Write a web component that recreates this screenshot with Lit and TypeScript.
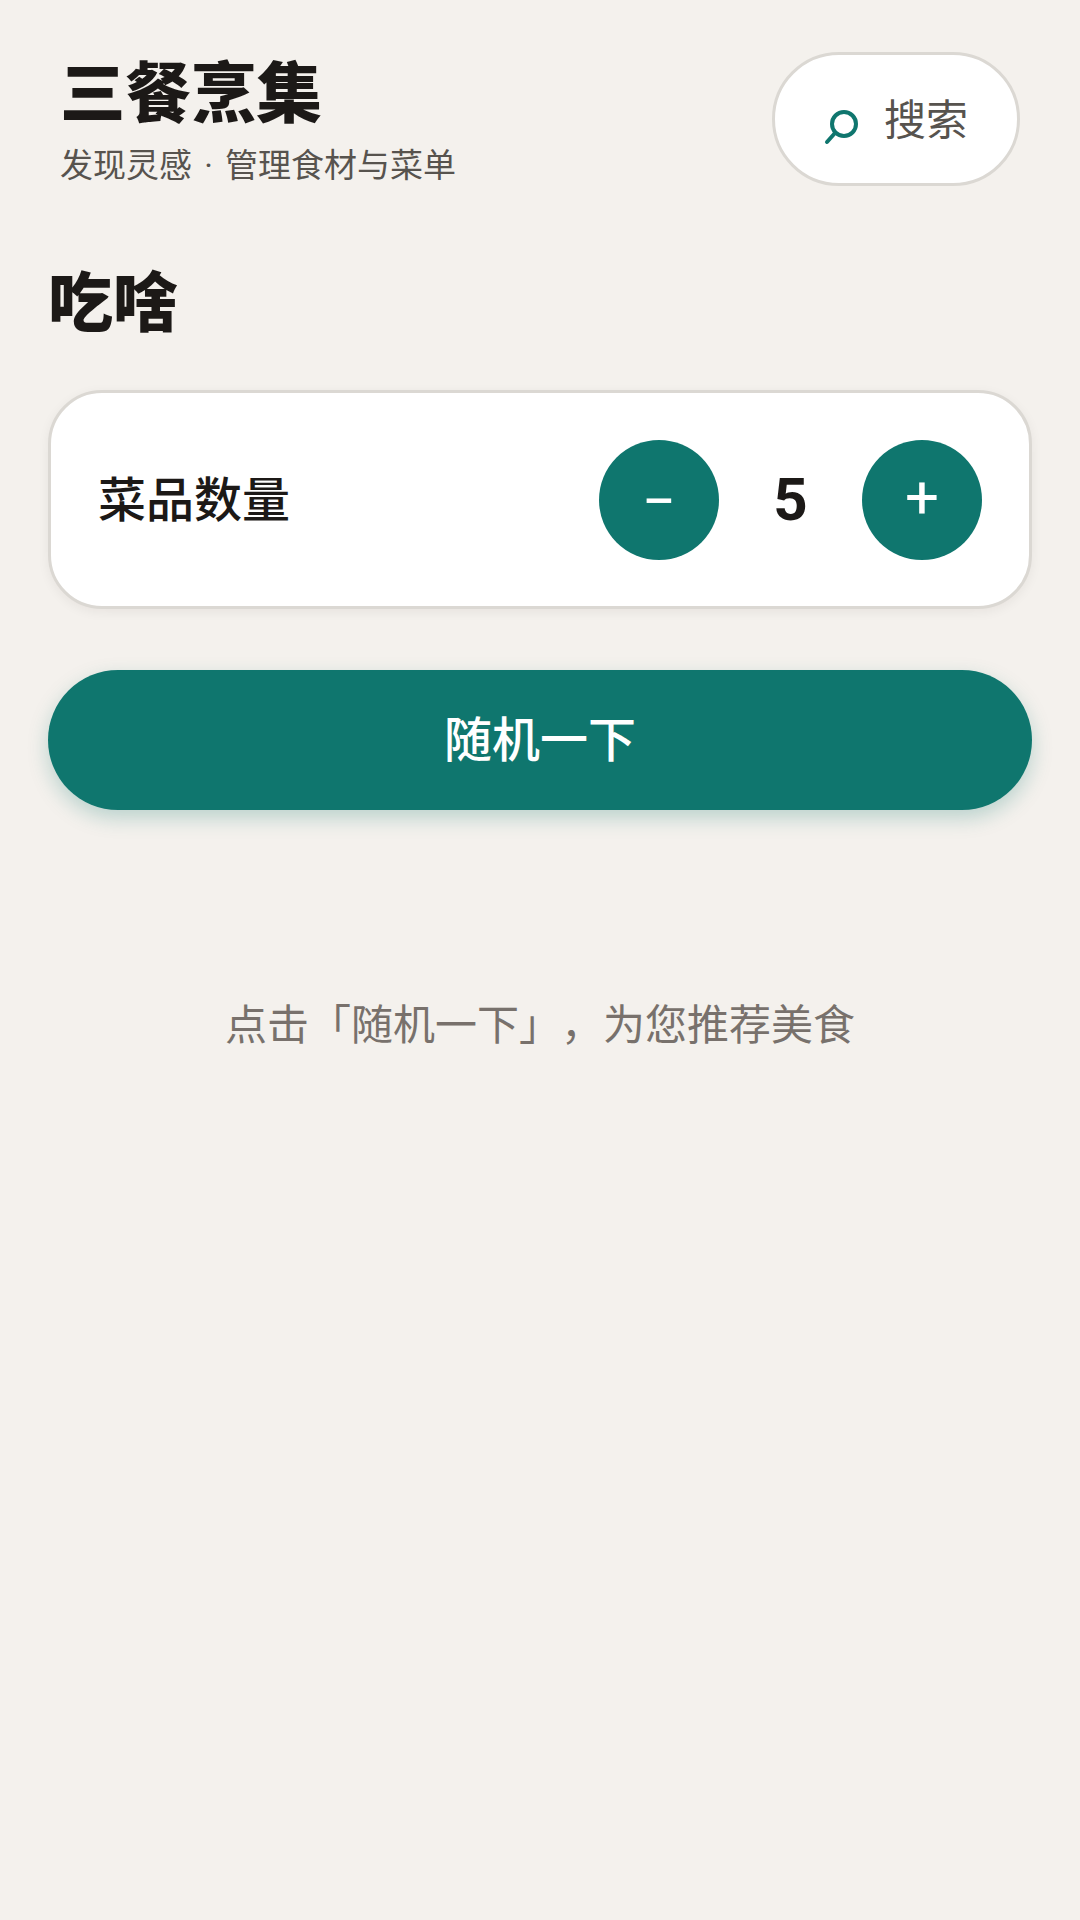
import { LitElement, html, css } from 'lit';
import { customElement, state } from 'lit/decorators.js';

@customElement('app-root')
export class AppRoot extends LitElement {
  @state() count = 5;

  static styles = css`
    :host {
      display: block;
      min-height: 1920px;
      background: #f4f1ed;
      color: #1c1917;
      font-family: Roboto, 'Noto Sans CJK SC', sans-serif;
      text-spacing-trim: space-all;
    }
    main {
      padding: 52px 48px 0;
      display: flex;
      flex-direction: column;
    }
    .header {
      display: flex;
      justify-content: space-between;
      align-items: flex-start;
      padding: 0 12px;
    }
    .titles {
      padding-top: 7px;
    }
    h1 {
      margin: 0;
      font-size: 65.5px;
      line-height: 72px;
      font-weight: 900;
    }
    .sub {
      margin-top: 15px;
      font-size: 33px;
      line-height: 40px;
      word-spacing: 4px;
      color: #57534e;
    }
    .search {
      width: 248px;
      height: 134px;
      box-sizing: border-box;
      border: 3px solid #dbd8d3;
      border-radius: 67px;
      background: #fff;
      display: flex;
      align-items: center;
      gap: 24px;
      padding: 0 0 0 49px;
      font-size: 42px;
      color: #57534e;
      font-family: inherit;
    }
    .search svg {
      margin-top: 16px;
    }
    .search span {
      margin-top: -6px;
    }
    h2 {
      margin: 79px 0 0;
      font-size: 65px;
      line-height: 78px;
      font-weight: 900;
    }
    .card {
      margin-top: 47px;
      height: 219px;
      box-sizing: border-box;
      border: 3px solid #dbd8d3;
      border-radius: 54px;
      background: #fff;
      box-shadow: 0 3px 12px rgba(28, 25, 23, 0.06);
      padding: 0 47px;
      display: flex;
      align-items: center;
      justify-content: space-between;
    }
    .label {
      margin-top: -8px;
      font-size: 48px;
      font-weight: 500;
    }
    .stepper {
      display: flex;
      align-items: center;
      padding-top: 1px;
    }
    .round {
      width: 120px;
      height: 120px;
      border: 0;
      padding: 0 0 6px;
      border-radius: 50%;
      background: #0f766e;
      color: #fff;
      display: flex;
      align-items: center;
      justify-content: center;
      font-family: inherit;
      font-size: 60px;
      font-weight: 400;
    }
    .round.minus {
      padding: 2px 0 0;
    }
    .count {
      width: 143px;
      margin-top: -2px;
      text-align: center;
      font-size: 60px;
      font-weight: 700;
    }
    .go {
      margin-top: 61px;
      height: 140px;
      border: 0;
      padding: 0 0 8px;
      border-radius: 70px;
      background: #0f766e;
      color: #fff;
      font-family: inherit;
      font-size: 48px;
      font-weight: 500;
      box-shadow: 0 8px 20px rgba(15, 118, 110, 0.25);
    }
    .hint {
      margin-top: 186px;
      text-align: center;
      font-size: 42px;
      line-height: 60px;
      color: #78716c;
    }
  `;

  render() {
    return html`
      <main>
        <div class="header">
          <div class="titles">
            <h1>三餐烹集</h1>
            <div class="sub">发现灵感 · 管理食材与菜单</div>
          </div>
          <button class="search">
            <svg width="36" height="36" viewBox="0 0 36 36" fill="none" stroke="#0f766e" stroke-width="4" stroke-linecap="round">
              <circle cx="20" cy="15" r="12"></circle>
              <path d="M11 24 L3 33"></path>
            </svg>
            <span>搜索</span>
          </button>
        </div>
        <h2>吃啥</h2>
        <div class="card">
          <span class="label">菜品数量</span>
          <div class="stepper">
            <button class="round minus" @click=${() => this.count--}>−</button>
            <span class="count">${this.count}</span>
            <button class="round" @click=${() => this.count++}>+</button>
          </div>
        </div>
        <button class="go">随机一下</button>
        <div class="hint">点击「随机一下」，为您推荐美食</div>
      </main>
    `;
  }
}
